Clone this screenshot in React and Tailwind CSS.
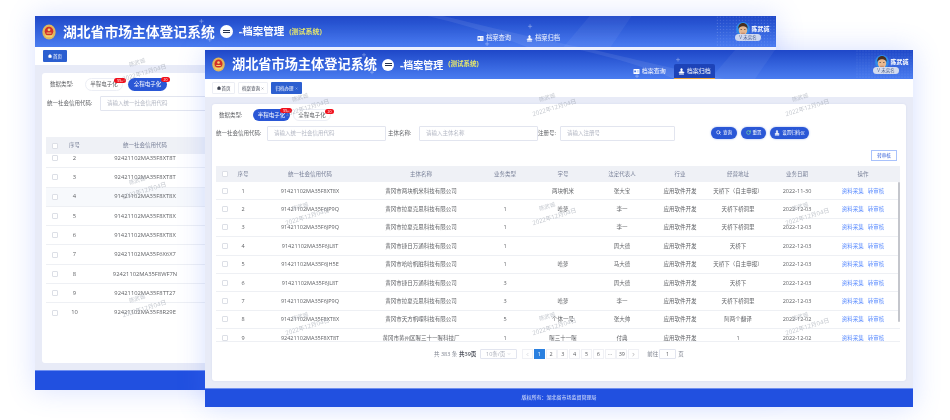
import { Home, Search, RotateCw, Stamp, ChevronLeft, ChevronRight, ChevronDown, X } from 'lucide-react';

const font = "font-['Open_Sans','Noto_Sans_CJK_SC',sans-serif]";
const cols = 'grid grid-cols-[17px_20px_114px_108px_60px_56px_62px_54px_62px_56px_76px]';
const backCols = 'grid grid-cols-[18px_21px_120px_1fr]';

const rows = [
  ['1', '91421102MA35F8XT8X', '黄冈市两块帆米科技有限公司', '', '两块帆米', '张大宝', '天桥下（自主申报）', '2022-11-30'],
  ['2', '91421102MA35F6JP9Q', '黄冈市拉夏克思科技有限公司', '1', '哈萝', '李一', '天桥下桥洞里', '2022-12-03'],
  ['3', '91421102MA35F6JP9Q', '黄冈市拉夏克思科技有限公司', '1', '', '李一', '天桥下桥洞里', '2022-12-03'],
  ['4', '91421102MA35F6JL8T', '黄冈市捷日万通科技有限公司', '1', '', '周大德', '天桥下', '2022-12-03'],
  ['5', '91421102MA35F6JH5E', '黄冈市哈哈帆脏科技有限公司', '1', '哈萝', '马大德', '天桥下（自主申报）', '2022-12-03'],
  ['6', '91421102MA35F6JL8T', '黄冈市捷日万通科技有限公司', '3', '', '周大德', '天桥下', '2022-12-03'],
  ['7', '91421102MA35F6JP9Q', '黄冈市拉夏克思科技有限公司', '3', '哈萝', '李一', '天桥下桥洞里', '2022-12-03'],
  ['8', '91421102MA35F8XT8X', '黄冈市天方帆哩科技有限公司', '5', '个体一号', '张大帅', '阿两个翻译', '2022-12-02'],
  ['9', '92421102MA35F8XT8T', '黄冈市黄州区喔三十一喔科技厂', '1', '喔三十一喔', '付典', '1', '2022-12-02'],
];

const backRows = [
  ['2', '92421102MA35F8XT8T'],
  ['3', '92421102MA35F8XT8T'],
  ['4', '91421102MA35F8XT8X'],
  ['5', '91421102MA35F8XT8X'],
  ['6', '91421102MA35F8XT8X'],
  ['7', '92421102MA35F6X6X7'],
  ['8', '92421102MA35F8WF7N'],
  ['9', '92421102MA35F8TT27'],
  ['10', '92421102MA35F8R29E'],
];

const pages = ['1', '2', '3', '4', '5', '6', '···', '39'];

function Emblem() {
  return (
    <svg viewBox="0 0 30 30" className="h-full w-full">
      <ellipse cx="15" cy="15" rx="12.5" ry="14" fill="#e3b65a" />
      <ellipse cx="15" cy="13.5" rx="8" ry="8.5" fill="#d22f2a" />
      <path d="M7 21h16l-3 4H10z" fill="#f3d26b" />
      <circle cx="15" cy="11" r="2.6" fill="#f3d26b" />
      <path d="M10.5 16h9v2h-9z" fill="#f3d26b" />
    </svg>
  );
}

function Avatar() {
  return (
    <svg viewBox="0 0 30 30" className="h-full w-full">
      <circle cx="15" cy="15" r="15" fill="#2f8be8" />
      <ellipse cx="15" cy="18" rx="9" ry="10" fill="#e9b98f" />
      <path d="M5 15C4 5 11 2 15 2s11 3 10 13c-2-4-4-6-10-6S7 11 5 15z" fill="#4a2f1d" />
      <rect x="10" y="15" width="2" height="2" fill="#3a2a20" />
      <rect x="18" y="15" width="2" height="2" fill="#3a2a20" />
      <path d="M11 23h8v3h-8z" fill="#c98f6b" />
    </svg>
  );
}

function HeaderArt() {
  return (
    <svg className="absolute inset-0 h-full w-full" viewBox="0 0 708 30" preserveAspectRatio="none">
      <defs>
        <pattern id="dots" width="3" height="3" patternUnits="userSpaceOnUse">
          <circle cx="1" cy="1" r="0.45" fill="#ffffff" opacity="0.28" />
        </pattern>
      </defs>
      <path d="M390 0C440 12 470 20 520 30H470C440 18 410 8 375 0z" fill="#ffffff" opacity="0.08" />
      <path d="M505 30L530 0h40l-20 30z" fill="#ffffff" opacity="0.05" />
      <rect x="650" y="0" width="58" height="30" fill="url(#dots)" />
      <path d="M157 5h4M159 3v4M165 23h4M167 21v4M471 10h4M473 8v4M430 27h4M432 25v4" stroke="#ffffff" strokeWidth="0.5" opacity="0.6" />
    </svg>
  );
}

function CardIcon({ className }) {
  return (
    <svg viewBox="0 0 12 10" className={className}>
      <rect width="12" height="10" rx="1" fill="#ffffff" />
      <rect x="1.5" y="3" width="3.5" height="3.5" fill="#4a78e6" />
      <path d="M6.5 3.5h4M6.5 6h4" stroke="#4a78e6" strokeWidth="0.8" />
    </svg>
  );
}

function Watermark({ className }) {
  return (
    <div className={`pointer-events-none absolute z-20 flex -rotate-[17deg] flex-col items-center text-[5.5px] leading-[7px] text-[#9aa0ac]/60 ${className}`}>
      <span className="-ml-[8px] mb-[5px]">陈武诚</span>
      <span className="whitespace-nowrap text-[6px]">2022年12月04日</span>
    </div>
  );
}

function Checkbox() {
  return <span className="h-[6px] w-[6px] rounded-[1px] border border-[#dcdfe6] bg-white" />;
}

function Badge({ children, className }) {
  return (
    <span className={`absolute -top-[1px] flex h-[5px] items-center justify-center rounded-full bg-[#f0101c] text-[3.5px] leading-none text-white ${className}`}>
      {children}
    </span>
  );
}

function ActionButton({ icon, children, className }) {
  return (
    <div className={`flex h-[12px] items-center justify-center gap-[2px] rounded-full bg-[#2a57d6] text-[4.5px] text-white shadow-[0_0_2px_rgba(42,87,214,0.5)] ${className}`}>
      {icon}
      {children}
    </div>
  );
}

function BackWindow() {
  return (
    <div className="absolute left-[35px] top-[16px] flex h-[374px] w-[741px] flex-col overflow-hidden bg-[#e8ebf7] shadow-[0_0_26px_rgba(80,120,255,0.22)]">
      <Watermark className="left-[85px] top-[42px]" />
      <Watermark className="left-[85px] top-[160px]" />
      <Watermark className="left-[85px] top-[278px]" />

      <header className="relative flex h-[31px] items-center bg-gradient-to-b from-[#1f47c8] to-[#4a7cf0] text-white">
        <HeaderArt />
        <div className="relative ml-[6px] h-[16px] w-[16px]"><Emblem /></div>
        <h1 className="relative ml-[6px] text-[13.8px] font-bold leading-none">湖北省市场主体登记系统</h1>
        <div className="relative ml-[5px] flex h-[13px] w-[13px] flex-col items-center justify-center gap-[1px] rounded-full bg-white">
          <span className="h-[1px] w-[7px] bg-[#26334d]" />
          <span className="h-[1px] w-[7px] bg-[#26334d]" />
        </div>
        <span className="relative ml-[6px] text-[10.5px] font-bold leading-none">-档案管理</span>
        <span className="relative ml-[5px] text-[7px] font-bold leading-none text-[#e8e86a]">(测试系统)</span>
        <nav className="relative ml-[155px] mt-[13px] flex text-[6.25px]">
          <div className="flex items-center gap-[2px]"><CardIcon className="h-[5px] w-[7px]" />档案查询</div>
          <div className="ml-[15px] flex items-center gap-[2px]"><Stamp size={7} fill="#ffffff" />档案归档</div>
        </nav>
        <div className="relative ml-auto mr-[4px] flex w-[38px] flex-col items-center">
          <div className="flex items-center gap-[1px]">
            <div className="h-[14px] w-[14px]"><Avatar /></div>
            <span className="text-[6px] font-semibold leading-none">陈武诚</span>
          </div>
          <span className="-ml-[10px] -mt-[2px] rounded-full bg-[#d4dcef] px-[4px] text-[4.5px] leading-[7px] text-[#52658f]">V 未实名</span>
        </div>
      </header>

      <div className="flex h-[18px] items-center bg-white pl-[8px]">
        <span className="flex h-[12px] w-[24px] items-center justify-center gap-[1px] rounded-[1px] bg-[#2c5fd0] text-[4.5px] text-white">
          <Home size={4} fill="#ffffff" />首页
        </span>
      </div>

      <div className="flex-1 px-[7px] pb-[7px] pt-[8px]">
        <div className="h-full rounded-[3px] bg-white pl-[4px] pt-[5px]">
          <div className="flex h-[13px] items-center text-[5.5px] text-[#606266]">
            <span className="ml-[4px] w-[35px]">数据类型:</span>
            <span className="relative flex h-[13px] w-[38px] items-center justify-center rounded-full border border-[#eceef5] bg-white">
              半程电子化
              <Badge className="-right-[4px] w-[12px]">99+</Badge>
            </span>
            <span className="relative ml-[5px] flex h-[13px] w-[39px] items-center justify-center rounded-full bg-[#2a57d6] text-white">
              全程电子化
              <Badge className="-right-[3px] w-[9px]">20</Badge>
            </span>
          </div>
          <div className="mt-[5px] flex h-[15px] items-center text-[5.5px]">
            <span className="ml-[1px] w-[53px] text-[#606266]">统一社会信用代码:</span>
            <span className="flex h-[15px] w-[125px] items-center rounded-[1px] border border-[#e2e5ef] pl-[6px] text-[#b4b8c4]">请输入统一社会信用代码</span>
          </div>
          <div className={`${backCols} mt-[26px] h-[17px] items-center bg-[#eff1f6] text-[5.5px] text-[#7a8299]`}>
            <span className="flex justify-center"><Checkbox /></span>
            <span className="text-center">序号</span>
            <span className="text-center">统一社会信用代码</span>
          </div>
          <div className="h-[168px] overflow-hidden">
            <div className="-mt-[5px]">
              {backRows.map((r) => (
                <div key={r[0]} className={`${backCols} h-[19.3px] items-center border-b border-[#eef0f4] text-[5.8px] text-[#606266] ${r[0] === '4' ? 'bg-[#f7f9fc]' : ''}`}>
                  <span className="flex justify-center"><Checkbox /></span>
                  <span className="text-center">{r[0]}</span>
                  <span className="text-center">{r[1]}</span>
                </div>
              ))}
            </div>
          </div>
        </div>
      </div>

      <footer className="h-[20px] border-t border-[#6f8ff0] bg-[#2150e0]" />
    </div>
  );
}

function FrontWindow() {
  return (
    <div className="absolute left-[205px] top-[50px] flex h-[357px] w-[708px] flex-col overflow-hidden bg-[#e8ebf7] shadow-[0_0_26px_rgba(80,120,255,0.24)]">
      <Watermark className="left-[78px] top-[43px]" />
      <Watermark className="left-[325px] top-[43px]" />
      <Watermark className="left-[578px] top-[43px]" />
      <Watermark className="left-[78px] top-[152px]" />
      <Watermark className="left-[325px] top-[152px]" />
      <Watermark className="left-[578px] top-[152px]" />
      <Watermark className="left-[78px] top-[262px]" />
      <Watermark className="left-[325px] top-[262px]" />
      <Watermark className="left-[578px] top-[262px]" />

      <header className="relative flex h-[29px] items-center bg-gradient-to-b from-[#1f47c8] to-[#4a7cf0] text-white">
        <HeaderArt />
        <div className="relative ml-[6px] h-[15px] w-[15px]"><Emblem /></div>
        <h1 className="relative ml-[6px] text-[13.2px] font-bold leading-none">湖北省市场主体登记系统</h1>
        <div className="relative ml-[5px] flex h-[12px] w-[12px] flex-col items-center justify-center gap-[1px] rounded-full bg-white">
          <span className="h-[1px] w-[7px] bg-[#26334d]" />
          <span className="h-[1px] w-[7px] bg-[#26334d]" />
        </div>
        <span className="relative ml-[6px] text-[10px] font-bold leading-none">-档案管理</span>
        <span className="relative ml-[5px] text-[6.5px] font-bold leading-none text-[#e8e86a]">(测试系统)</span>
        <nav className="relative ml-[154px] flex h-[15px] self-end text-[6px]">
          <div className="flex items-center gap-[2px]"><CardIcon className="h-[5px] w-[7px]" />档案查询</div>
          <div className="ml-[8px] flex w-[41px] items-center justify-center gap-[2px] rounded-t-[2px] border-b border-[#e8a33d] bg-[#1d43b8]"><Stamp size={7} fill="#ffffff" />档案归档</div>
        </nav>
        <div className="relative ml-auto mr-[3px] flex w-[36px] flex-col items-center">
          <div className="flex items-center gap-[1px]">
            <div className="h-[14px] w-[14px]"><Avatar /></div>
            <span className="text-[6px] font-semibold leading-none">陈武诚</span>
          </div>
          <span className="-ml-[12px] -mt-[2px] rounded-full bg-[#d4dcef] px-[4px] text-[4.5px] leading-[7px] text-[#52658f]">V 未实名</span>
        </div>
      </header>

      <div className="flex h-[18px] items-center gap-[3px] bg-white pl-[7px] text-[4.5px]">
        <span className="flex h-[12px] w-[23px] items-center justify-center gap-[1px] rounded-[1px] border border-[#eceef4] text-[#3d4250]">
          <Home size={4} fill="#3d4250" />首页
        </span>
        <span className="flex h-[12px] w-[30px] items-center justify-center gap-[1px] rounded-[1px] border border-[#eceef4] text-[#3d4250]">
          档案查询<X size={3} />
        </span>
        <span className="flex h-[12px] w-[31px] items-center justify-center gap-[1px] rounded-[1px] bg-[#2c5fd0] text-white">
          归档办理<X size={3} />
        </span>
      </div>

      <div className="flex-1 px-[7px] pb-[7px] pt-[7px]">
        <div className="h-full rounded-[3px] bg-white pl-[4px] pr-[6px] pt-[5px] shadow-[0_0_2px_rgba(120,130,180,0.15)]">
          <div className="flex h-[12px] items-center text-[5.5px] text-[#606266]">
            <span className="ml-[3px] w-[34px]">数据类型:</span>
            <span className="relative flex h-[12px] w-[37px] items-center justify-center rounded-full bg-[#2a57d6] text-white">
              半程电子化
              <Badge className="-right-[2px] w-[12px]">99+</Badge>
            </span>
            <span className="relative ml-[3px] flex h-[12px] w-[38px] items-center justify-center rounded-full border border-[#eceef5] bg-white">
              全程电子化
              <Badge className="right-[-4px] w-[9px]">20</Badge>
            </span>
          </div>

          <div className="mt-[5px] flex h-[15px] items-center text-[5.5px]">
            <span className="w-[51px] text-[#606266]">统一社会信用代码:</span>
            <span className="flex h-[15px] w-[119px] items-center rounded-[1px] border border-[#e2e5ef] pl-[6px] text-[#b4b8c4]">请输入统一社会信用代码</span>
            <span className="ml-[2px] w-[31px] text-[#606266]">主体名称:</span>
            <span className="flex h-[15px] w-[119px] items-center rounded-[1px] border border-[#e2e5ef] pl-[6px] text-[#b4b8c4]">请输入主体名称</span>
            <span className="w-[22px] text-[#606266]">注册号:</span>
            <span className="flex h-[15px] w-[115px] items-center rounded-[1px] border border-[#e2e5ef] pl-[6px] text-[#b4b8c4]">请输入注册号</span>
            <ActionButton className="ml-[36px] -mt-[2px] w-[26px]" icon={<Search size={5} strokeWidth={3} />}>查询</ActionButton>
            <ActionButton className="ml-[4px] -mt-[2px] w-[25px]" icon={<RotateCw size={5} strokeWidth={3} color="#7be0a0" />}>重置</ActionButton>
            <ActionButton className="ml-[4px] -mt-[2px] w-[39px]" icon={<Stamp size={6} fill="#ffffff" />}>设置归档仪</ActionButton>
          </div>

          <div className="mt-[9px] flex justify-end pr-[3px]">
            <span className="flex h-[11px] w-[26px] items-center justify-center border border-[#a9c2fb] text-[4.5px] text-[#2a57d6]">转审核</span>
          </div>

          <div className={`${cols} mt-[5px] h-[16px] items-center bg-[#eff1f6] text-center text-[5.5px] text-[#7a8299]`}>
            <span className="flex justify-center"><Checkbox /></span>
            <span>序号</span>
            <span>统一社会信用代码</span>
            <span>主体名称</span>
            <span>业务类型</span>
            <span>字号</span>
            <span>法定代表人</span>
            <span>行业</span>
            <span>经营地址</span>
            <span>业务日期</span>
            <span>操作</span>
          </div>

          <div className="relative h-[160px] overflow-hidden border-b border-[#eef0f4]">
            {rows.map((r) => (
              <div key={r[0]} className={`${cols} h-[18.4px] items-center border-b border-[#eef0f4] text-center text-[5.5px] text-[#606266]`}>
                <span className="flex justify-center"><Checkbox /></span>
                <span>{r[0]}</span>
                <span>{r[1]}</span>
                <span>{r[2]}</span>
                <span>{r[3]}</span>
                <span>{r[4]}</span>
                <span>{r[5]}</span>
                <span>应用软件开发</span>
                <span>{r[6]}</span>
                <span>{r[7]}</span>
                <span className="flex justify-center gap-[4px] text-[#5b8cff]">
                  <span>资料采集</span>
                  <span>转审核</span>
                </span>
              </div>
            ))}
            <span className="absolute right-0 top-0 h-[140px] w-[2px] rounded-full bg-[#c4c6cc]" />
          </div>

          <div className="mt-[7px] flex h-[10px] items-center pl-[218px] text-[5.5px] text-[#7f8490]">
            <span className="w-[25px] whitespace-nowrap">共 383 条</span>
            <span className="w-[21px] whitespace-nowrap font-semibold text-[#50545e]">共39页</span>
            <span className="flex h-[10px] w-[37px] items-center justify-between whitespace-nowrap rounded-[1px] border border-[#e2e5ef] px-[5px] text-[#a8acb8]">
              10条/页<ChevronDown size={4} />
            </span>
            <div className="ml-[5px] flex gap-[0.8px]">
              <span className="flex h-[10px] w-[11px] items-center justify-center border border-[#f0f1f5] text-[#b0b4c0]"><ChevronLeft size={5} /></span>
              {pages.map((p) => (
                <span key={p} className={`flex h-[10px] w-[11px] items-center justify-center border ${p === '1' ? 'border-[#2a80e0] bg-[#2a80e0] text-white' : 'border-[#f0f1f5] text-[#606266]'}`}>{p}</span>
              ))}
              <span className="flex h-[10px] w-[11px] items-center justify-center border border-[#f0f1f5] text-[#606266]"><ChevronRight size={5} /></span>
            </div>
            <span className="ml-[8px]">前往</span>
            <span className="ml-[1px] flex h-[10px] w-[17px] items-center justify-center rounded-[1px] border border-[#e2e5ef] text-[#606266]">1</span>
            <span className="ml-[2px]">页</span>
          </div>
        </div>
      </div>

      <footer className="flex h-[19px] items-center justify-center border-t border-[#6f8ff0] bg-[#2150e0] text-[5px] text-[#dfe6fb]">
        版权所有：湖北省市场监督管理局
      </footer>
    </div>
  );
}

export default function App() {
  return (
    <div className={`${font} relative h-[420px] w-[950px] overflow-hidden bg-white blur-[0.35px]`}>
      <BackWindow />
      <FrontWindow />
    </div>
  );
}
